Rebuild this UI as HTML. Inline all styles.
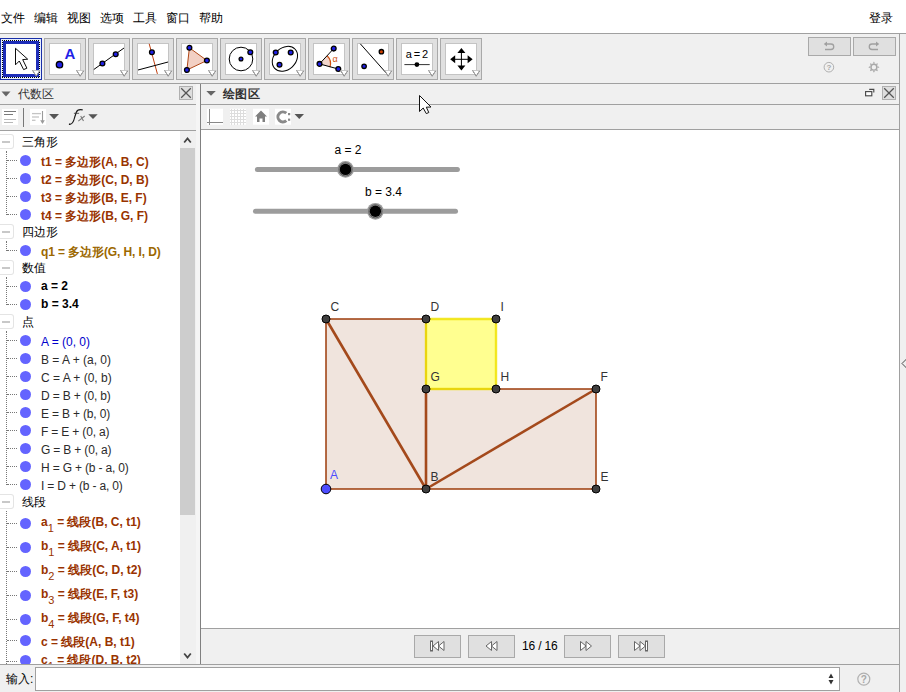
<!DOCTYPE html>
<html><head><meta charset="utf-8">
<style>
*{margin:0;padding:0;box-sizing:border-box}
html,body{width:906px;height:692px;overflow:hidden;background:#fff;font-family:"Liberation Sans",sans-serif;font-size:12px;color:#000}
.a{position:absolute}
.t{position:absolute;white-space:nowrap;font-size:12px;line-height:14px}
.row{position:absolute;left:41px;white-space:nowrap;font-size:12px;line-height:14px}
.b{font-weight:bold}
svg{position:absolute;overflow:visible}
</style></head><body>
<div class="t" style="left:1px;top:11px">文件</div><div class="t" style="left:34px;top:11px">编辑</div><div class="t" style="left:67px;top:11px">视图</div><div class="t" style="left:100px;top:11px">选项</div><div class="t" style="left:133px;top:11px">工具</div><div class="t" style="left:166px;top:11px">窗口</div><div class="t" style="left:199px;top:11px">帮助</div><div class="t" style="left:869px;top:11px">登录</div><svg style="left:0;top:0" width="906" height="692" viewBox="0 0 906 692"><rect x="0" y="34" width="906" height="658" fill="#f0f0f0"/><rect x="0" y="33" width="906" height="1" fill="#a0a0a0"/><rect x="0" y="83" width="899" height="1" fill="#a0a0a0"/><rect x="899" y="33" width="1" height="659" fill="#a0a0a0"/><rect x="44.5" y="38.5" width="41" height="41" fill="#e0e0e0" stroke="#a9a9a9"/><rect x="49.5" y="43.5" width="31" height="31" fill="#fff" stroke="#c4c4c4"/><rect x="88.5" y="38.5" width="41" height="41" fill="#e0e0e0" stroke="#a9a9a9"/><rect x="93.5" y="43.5" width="31" height="31" fill="#fff" stroke="#c4c4c4"/><rect x="132.5" y="38.5" width="41" height="41" fill="#e0e0e0" stroke="#a9a9a9"/><rect x="137.5" y="43.5" width="31" height="31" fill="#fff" stroke="#c4c4c4"/><rect x="176.5" y="38.5" width="41" height="41" fill="#e0e0e0" stroke="#a9a9a9"/><rect x="181.5" y="43.5" width="31" height="31" fill="#fff" stroke="#c4c4c4"/><rect x="220.5" y="38.5" width="41" height="41" fill="#e0e0e0" stroke="#a9a9a9"/><rect x="225.5" y="43.5" width="31" height="31" fill="#fff" stroke="#c4c4c4"/><rect x="264.5" y="38.5" width="41" height="41" fill="#e0e0e0" stroke="#a9a9a9"/><rect x="269.5" y="43.5" width="31" height="31" fill="#fff" stroke="#c4c4c4"/><rect x="308.5" y="38.5" width="41" height="41" fill="#e0e0e0" stroke="#a9a9a9"/><rect x="313.5" y="43.5" width="31" height="31" fill="#fff" stroke="#c4c4c4"/><rect x="352.5" y="38.5" width="41" height="41" fill="#e0e0e0" stroke="#a9a9a9"/><rect x="357.5" y="43.5" width="31" height="31" fill="#fff" stroke="#c4c4c4"/><rect x="396.5" y="38.5" width="41" height="41" fill="#e0e0e0" stroke="#a9a9a9"/><rect x="401.5" y="43.5" width="31" height="31" fill="#fff" stroke="#c4c4c4"/><rect x="440.5" y="38.5" width="41" height="41" fill="#e0e0e0" stroke="#a9a9a9"/><rect x="445.5" y="43.5" width="31" height="31" fill="#fff" stroke="#c4c4c4"/><rect x="0" y="38" width="42" height="42" fill="#1a2fa8"/><rect x="1" y="39" width="40" height="40" fill="#e6efff"/><rect x="3" y="41" width="36" height="36" fill="#1c2cb8"/><rect x="6" y="44" width="30" height="30" fill="#fff"/><g fill="#000"><rect x="2" y="40" width="1" height="1"/><rect x="2" y="77" width="1" height="1"/><rect x="4" y="40" width="1" height="1"/><rect x="4" y="77" width="1" height="1"/><rect x="6" y="40" width="1" height="1"/><rect x="6" y="77" width="1" height="1"/><rect x="8" y="40" width="1" height="1"/><rect x="8" y="77" width="1" height="1"/><rect x="10" y="40" width="1" height="1"/><rect x="10" y="77" width="1" height="1"/><rect x="12" y="40" width="1" height="1"/><rect x="12" y="77" width="1" height="1"/><rect x="14" y="40" width="1" height="1"/><rect x="14" y="77" width="1" height="1"/><rect x="16" y="40" width="1" height="1"/><rect x="16" y="77" width="1" height="1"/><rect x="18" y="40" width="1" height="1"/><rect x="18" y="77" width="1" height="1"/><rect x="20" y="40" width="1" height="1"/><rect x="20" y="77" width="1" height="1"/><rect x="22" y="40" width="1" height="1"/><rect x="22" y="77" width="1" height="1"/><rect x="24" y="40" width="1" height="1"/><rect x="24" y="77" width="1" height="1"/><rect x="26" y="40" width="1" height="1"/><rect x="26" y="77" width="1" height="1"/><rect x="28" y="40" width="1" height="1"/><rect x="28" y="77" width="1" height="1"/><rect x="30" y="40" width="1" height="1"/><rect x="30" y="77" width="1" height="1"/><rect x="32" y="40" width="1" height="1"/><rect x="32" y="77" width="1" height="1"/><rect x="34" y="40" width="1" height="1"/><rect x="34" y="77" width="1" height="1"/><rect x="36" y="40" width="1" height="1"/><rect x="36" y="77" width="1" height="1"/><rect x="38" y="40" width="1" height="1"/><rect x="38" y="77" width="1" height="1"/><rect x="2" y="42" width="1" height="1"/><rect x="39" y="42" width="1" height="1"/><rect x="2" y="44" width="1" height="1"/><rect x="39" y="44" width="1" height="1"/><rect x="2" y="46" width="1" height="1"/><rect x="39" y="46" width="1" height="1"/><rect x="2" y="48" width="1" height="1"/><rect x="39" y="48" width="1" height="1"/><rect x="2" y="50" width="1" height="1"/><rect x="39" y="50" width="1" height="1"/><rect x="2" y="52" width="1" height="1"/><rect x="39" y="52" width="1" height="1"/><rect x="2" y="54" width="1" height="1"/><rect x="39" y="54" width="1" height="1"/><rect x="2" y="56" width="1" height="1"/><rect x="39" y="56" width="1" height="1"/><rect x="2" y="58" width="1" height="1"/><rect x="39" y="58" width="1" height="1"/><rect x="2" y="60" width="1" height="1"/><rect x="39" y="60" width="1" height="1"/><rect x="2" y="62" width="1" height="1"/><rect x="39" y="62" width="1" height="1"/><rect x="2" y="64" width="1" height="1"/><rect x="39" y="64" width="1" height="1"/><rect x="2" y="66" width="1" height="1"/><rect x="39" y="66" width="1" height="1"/><rect x="2" y="68" width="1" height="1"/><rect x="39" y="68" width="1" height="1"/><rect x="2" y="70" width="1" height="1"/><rect x="39" y="70" width="1" height="1"/><rect x="2" y="72" width="1" height="1"/><rect x="39" y="72" width="1" height="1"/><rect x="2" y="74" width="1" height="1"/><rect x="39" y="74" width="1" height="1"/><rect x="2" y="76" width="1" height="1"/><rect x="39" y="76" width="1" height="1"/></g><g transform="translate(0,0)"><path d="M15.5 48.3 L15.5 64.8 L19.3 61 L23.6 69.6 L26.9 68.2 L22.7 59.6 L27.7 59.2 Z" fill="#fff" stroke="#000" stroke-width="0.95" stroke-linejoin="miter"/></g><g transform="translate(49,43)"><circle cx="10.5" cy="21.7" r="3.2" fill="#1f1fe6" stroke="#000" stroke-width="1.3"/><text x="15.6" y="16" font-family="Liberation Sans" font-size="15" font-weight="bold" fill="#1f1fe6">A</text></g><g transform="translate(93,43)"><line x1="0.8" y1="26.5" x2="31" y2="5" stroke="#000" stroke-width="1"/><circle cx="9.4" cy="20.5" r="2.4" fill="#1f1fe6" stroke="#000" stroke-width="1.3"/><circle cx="22.7" cy="11.3" r="2.4" fill="#1f1fe6" stroke="#000" stroke-width="1.3"/></g><g transform="translate(137,43)"><line x1="12.2" y1="0.8" x2="20.4" y2="30.9" stroke="#c04010" stroke-width="1"/><line x1="1" y1="27" x2="31.1" y2="19" stroke="#000" stroke-width="1"/><circle cx="14.9" cy="9.3" r="2.4" fill="#1f1fe6" stroke="#000" stroke-width="1.3"/></g><g transform="translate(181,43)"><polygon points="8.4,4.8 25.9,17.5 5.9,27" fill="#f2d0c4" stroke="#b04818" stroke-width="1"/><circle cx="8.4" cy="4.8" r="2.4" fill="#1f1fe6" stroke="#000" stroke-width="1.3"/><circle cx="25.9" cy="17.5" r="2.4" fill="#1f1fe6" stroke="#000" stroke-width="1.3"/><circle cx="5.9" cy="27" r="2.4" fill="#1f1fe6" stroke="#000" stroke-width="1.3"/></g><g transform="translate(225,43)"><circle cx="16" cy="16" r="11.8" fill="none" stroke="#000" stroke-width="1"/><circle cx="16" cy="16" r="1.9" fill="#1f1fe6" stroke="#000" stroke-width="1.3"/><circle cx="25.3" cy="9.3" r="2.4" fill="#1f1fe6" stroke="#000" stroke-width="1.3"/></g><g transform="translate(269,43)"><ellipse cx="15.9" cy="15.8" rx="14" ry="10.9" transform="rotate(-43 15.9 15.8)" fill="none" stroke="#000" stroke-width="1"/><circle cx="6.7" cy="9.5" r="2.4" fill="#1f1fe6" stroke="#000" stroke-width="1.3"/><circle cx="21.7" cy="9.5" r="2.4" fill="#1f1fe6" stroke="#000" stroke-width="1.3"/><circle cx="10.5" cy="21.8" r="2.4" fill="#1f1fe6" stroke="#000" stroke-width="1.3"/></g><g transform="translate(313,43)"><path d="M6.5 20.9 L14.1 12.8 A11 11 0 0 1 16.9 24.3 Z" fill="#f2d6cc"/><path d="M14.1 12.8 A11 11 0 0 1 16.9 24.3" fill="none" stroke="#d05010" stroke-width="1.2"/><line x1="6.5" y1="20.9" x2="20.7" y2="5.6" stroke="#000"/><line x1="6.5" y1="20.9" x2="25.3" y2="26" stroke="#000"/><circle cx="6.5" cy="20.9" r="2.4" fill="#1f1fe6" stroke="#000" stroke-width="1.3"/><circle cx="20.7" cy="5.6" r="2.4" fill="#1f1fe6" stroke="#000" stroke-width="1.3"/><circle cx="25.3" cy="26" r="2.4" fill="#1f1fe6" stroke="#000" stroke-width="1.3"/><text x="19.5" y="19.3" font-family="Liberation Sans" font-size="9" fill="#d05010">α</text></g><g transform="translate(357,43)"><line x1="3.3" y1="0.8" x2="30" y2="30.9" stroke="#000" stroke-width="1"/><circle cx="24.4" cy="8.7" r="2.2" fill="#d04000" stroke="#000" stroke-width="1.3"/><circle cx="7.1" cy="23.3" r="2.2" fill="#1f1fe6" stroke="#000" stroke-width="1.3"/></g><g transform="translate(401,43)"><text x="4.7" y="14.8" font-family="Liberation Sans" font-size="11" fill="#000" textLength="22.5">a = 2</text><line x1="3.4" y1="21.6" x2="28.7" y2="21.6" stroke="#333" stroke-width="1"/><circle cx="15.9" cy="21.6" r="2.4" fill="#000"/></g><g transform="translate(445,43)"><g fill="#000"><rect x="15.9" y="8" width="1" height="17"/><rect x="8" y="15.8" width="17" height="1"/><path d="M16.4 5 L20.4 10 L12.4 10 Z"/><path d="M16.4 27.5 L20.4 22.5 L12.4 22.5 Z"/><path d="M5.2 16.3 L10.2 12.3 L10.2 20.3 Z"/><path d="M27.6 16.3 L22.6 12.3 L22.6 20.3 Z"/></g></g><path d="M32.6 70.5 L39.8 70.5 L36.2 76 Z" fill="#fff" stroke="#c4c4c4" stroke-width="0.9"/><path d="M32.6 70.5 L36.2 76.2 L39.8 70.5" fill="none" stroke="#6a6a6a" stroke-width="1" stroke-dasharray="1.3 0.6"/><path d="M76.6 70.5 L83.8 70.5 L80.2 76 Z" fill="#fff" stroke="#c4c4c4" stroke-width="0.9"/><path d="M76.6 70.5 L80.2 76.2 L83.8 70.5" fill="none" stroke="#6a6a6a" stroke-width="1" stroke-dasharray="1.3 0.6"/><path d="M120.6 70.5 L127.8 70.5 L124.2 76 Z" fill="#fff" stroke="#c4c4c4" stroke-width="0.9"/><path d="M120.6 70.5 L124.2 76.2 L127.8 70.5" fill="none" stroke="#6a6a6a" stroke-width="1" stroke-dasharray="1.3 0.6"/><path d="M164.6 70.5 L171.8 70.5 L168.2 76 Z" fill="#fff" stroke="#c4c4c4" stroke-width="0.9"/><path d="M164.6 70.5 L168.2 76.2 L171.8 70.5" fill="none" stroke="#6a6a6a" stroke-width="1" stroke-dasharray="1.3 0.6"/><path d="M208.6 70.5 L215.8 70.5 L212.2 76 Z" fill="#fff" stroke="#c4c4c4" stroke-width="0.9"/><path d="M208.6 70.5 L212.2 76.2 L215.8 70.5" fill="none" stroke="#6a6a6a" stroke-width="1" stroke-dasharray="1.3 0.6"/><path d="M252.6 70.5 L259.8 70.5 L256.2 76 Z" fill="#fff" stroke="#c4c4c4" stroke-width="0.9"/><path d="M252.6 70.5 L256.2 76.2 L259.8 70.5" fill="none" stroke="#6a6a6a" stroke-width="1" stroke-dasharray="1.3 0.6"/><path d="M296.6 70.5 L303.8 70.5 L300.2 76 Z" fill="#fff" stroke="#c4c4c4" stroke-width="0.9"/><path d="M296.6 70.5 L300.2 76.2 L303.8 70.5" fill="none" stroke="#6a6a6a" stroke-width="1" stroke-dasharray="1.3 0.6"/><path d="M340.6 70.5 L347.8 70.5 L344.2 76 Z" fill="#fff" stroke="#c4c4c4" stroke-width="0.9"/><path d="M340.6 70.5 L344.2 76.2 L347.8 70.5" fill="none" stroke="#6a6a6a" stroke-width="1" stroke-dasharray="1.3 0.6"/><path d="M384.6 70.5 L391.8 70.5 L388.2 76 Z" fill="#fff" stroke="#c4c4c4" stroke-width="0.9"/><path d="M384.6 70.5 L388.2 76.2 L391.8 70.5" fill="none" stroke="#6a6a6a" stroke-width="1" stroke-dasharray="1.3 0.6"/><path d="M428.6 70.5 L435.8 70.5 L432.2 76 Z" fill="#fff" stroke="#c4c4c4" stroke-width="0.9"/><path d="M428.6 70.5 L432.2 76.2 L435.8 70.5" fill="none" stroke="#6a6a6a" stroke-width="1" stroke-dasharray="1.3 0.6"/><path d="M472.6 70.5 L479.8 70.5 L476.2 76 Z" fill="#fff" stroke="#c4c4c4" stroke-width="0.9"/><path d="M472.6 70.5 L476.2 76.2 L479.8 70.5" fill="none" stroke="#6a6a6a" stroke-width="1" stroke-dasharray="1.3 0.6"/><rect x="808.5" y="37.5" width="42" height="18" fill="#e0e0e0" stroke="#a9a9a9"/><rect x="853.5" y="37.5" width="42" height="18" fill="#e0e0e0" stroke="#a9a9a9"/><path d="M826 44 L831 44 A2.75 2.75 0 0 1 831 49.5 L825 49.5" fill="none" stroke="#a0a0a0" stroke-width="1.3"/><path d="M823.8 44 L827 41.5 L827 46.5 Z" fill="#a0a0a0"/><path d="M877 44 L872 44 A2.75 2.75 0 0 0 872 49.5 L878 49.5" fill="none" stroke="#a0a0a0" stroke-width="1.3"/><path d="M879.2 44 L876 41.5 L876 46.5 Z" fill="#a0a0a0"/><circle cx="828.9" cy="67.2" r="4.8" fill="none" stroke="#b0b0b0" stroke-width="1"/><text x="826.6" y="70.3" font-family="Liberation Sans" font-size="8" font-weight="bold" fill="#a8a8a8">?</text><g transform="translate(873.9,67.2)" fill="#a8a8a8"><circle r="2.9" fill="none" stroke="#a8a8a8" stroke-width="1.4"/><path d="M-1.1 -3.6 L0 -5.6 L1.1 -3.6 Z" transform="rotate(0)"/><path d="M-1.1 -3.6 L0 -5.6 L1.1 -3.6 Z" transform="rotate(45)"/><path d="M-1.1 -3.6 L0 -5.6 L1.1 -3.6 Z" transform="rotate(90)"/><path d="M-1.1 -3.6 L0 -5.6 L1.1 -3.6 Z" transform="rotate(135)"/><path d="M-1.1 -3.6 L0 -5.6 L1.1 -3.6 Z" transform="rotate(180)"/><path d="M-1.1 -3.6 L0 -5.6 L1.1 -3.6 Z" transform="rotate(225)"/><path d="M-1.1 -3.6 L0 -5.6 L1.1 -3.6 Z" transform="rotate(270)"/><path d="M-1.1 -3.6 L0 -5.6 L1.1 -3.6 Z" transform="rotate(315)"/></g><rect x="0" y="104" width="196" height="1" fill="#a0a0a0"/><rect x="0" y="130" width="196" height="1" fill="#a0a0a0"/><rect x="0" y="131" width="180" height="533" fill="#fff"/><path d="M1.5 91.5 L10.5 91.5 L6 96.5 Z" fill="#666"/><rect x="179.5" y="86.5" width="13" height="13" fill="#dedede" stroke="#b0b0b0"/><path d="M181.2 88.2 L190.8 97.8 M190.8 88.2 L181.2 97.8" stroke="#555" stroke-width="1.25"/><rect x="2" y="109" width="16" height="16" fill="#fff"/><g stroke-width="1"><line x1="4" y1="111.5" x2="16" y2="111.5" stroke="#7a7a7a"/><line x1="4" y1="114.5" x2="13" y2="114.5" stroke="#7a7a7a"/><line x1="4" y1="119.5" x2="16" y2="119.5" stroke="#b8b8b8"/><line x1="4" y1="122.5" x2="13" y2="122.5" stroke="#b8b8b8"/></g><rect x="23" y="108" width="1" height="19" fill="#777"/><rect x="30" y="109" width="16" height="16" fill="#fff"/><g stroke-width="1.3" stroke="#c4c4c4"><line x1="32" y1="113.6" x2="41" y2="113.6"/><line x1="32" y1="117" x2="39" y2="117"/><line x1="32" y1="120.3" x2="35.5" y2="120.3"/></g><line x1="42.5" y1="111" x2="42.5" y2="122" stroke="#9a9a9a" stroke-width="1.1"/><path d="M40.2 120.3 L44.8 120.3 L42.5 124 Z" fill="#9a9a9a"/><path d="M49.1 114 L59 114 L54.05 119.2 Z" fill="#555"/><path d="M69.2 124.3 C71.8 124.6 73.6 122 74.6 117.5 L76.2 112.5 C77 110.2 79.5 109.2 82.7 109.9" fill="none" stroke="#1a1a1a" stroke-width="1.15"/><circle cx="69.6" cy="124.2" r="0.8" fill="#1a1a1a"/><path d="M73.9 113.3 L79.1 113.3" stroke="#333" stroke-width="0.8"/><path d="M80.7 116 L83.5 121.1 M84.7 116 L78.3 121.1" stroke="#7a7a7a" stroke-width="1.1"/><path d="M88.3 114.3 L97.7 114.3 L93 119 Z" fill="#555"/><rect x="180" y="131" width="16" height="533" fill="#f0f0f0"/><rect x="180" y="148" width="15" height="367" fill="#cdcdcd"/><path d="M184.2 142.5 L187.5 138.5 L190.8 142.5" fill="none" stroke="#444" stroke-width="1.8"/><path d="M184.2 653.5 L187.5 657.5 L190.8 653.5" fill="none" stroke="#444" stroke-width="1.8"/><rect x="196" y="84" width="4" height="580" fill="#f5f5f5"/><rect x="200" y="84" width="1" height="580" fill="#808080"/><rect x="201" y="104" width="698" height="1" fill="#a0a0a0"/><rect x="201" y="129" width="698" height="1" fill="#a0a0a0"/><rect x="201" y="130" width="698" height="498" fill="#fff"/><rect x="201" y="628" width="698" height="1" fill="#a0a0a0"/><rect x="0" y="664" width="899" height="1" fill="#a0a0a0"/><path d="M206.3 90.9 L215.8 90.9 L211 95.7 Z" fill="#666"/><rect x="865.6" y="91.6" width="6.2" height="4.2" fill="#fff" stroke="#4a4a4a" stroke-width="1.15"/><path d="M869.2 89.3 L873.8 89.3 L873.8 92.6" fill="none" stroke="#4a4a4a" stroke-width="1.15"/><rect x="882.5" y="86.5" width="13" height="13" fill="#dedede" stroke="#b0b0b0"/><path d="M884.2 88.2 L893.8 97.8 M893.8 88.2 L884.2 97.8" stroke="#555" stroke-width="1.25"/><rect x="207" y="108.7" width="16" height="16" fill="#fff"/><line x1="209.5" y1="109" x2="209.5" y2="125" stroke="#888"/><line x1="207" y1="122.5" x2="223" y2="122.5" stroke="#888"/><rect x="230" y="108.7" width="16" height="16" fill="#fff"/><line x1="231.5" y1="109" x2="231.5" y2="125" stroke="#ddd"/><line x1="230" y1="110.5" x2="246" y2="110.5" stroke="#ddd"/><line x1="234.5" y1="109" x2="234.5" y2="125" stroke="#ddd"/><line x1="230" y1="113.5" x2="246" y2="113.5" stroke="#ddd"/><line x1="237.5" y1="109" x2="237.5" y2="125" stroke="#ddd"/><line x1="230" y1="116.5" x2="246" y2="116.5" stroke="#ddd"/><line x1="240.5" y1="109" x2="240.5" y2="125" stroke="#ddd"/><line x1="230" y1="119.5" x2="246" y2="119.5" stroke="#ddd"/><line x1="243.5" y1="109" x2="243.5" y2="125" stroke="#ddd"/><line x1="230" y1="122.5" x2="246" y2="122.5" stroke="#ddd"/><rect x="253" y="108.7" width="16" height="16" fill="#fff"/><path d="M261 110.5 L267 116.5 L265 116.5 L265 122 L262.5 122 L262.5 118.5 L259.5 118.5 L259.5 122 L257 122 L257 116.5 L255 116.5 Z" fill="#808080"/><rect x="275" y="108.7" width="16" height="16" fill="#fff"/><path d="M286.3 113.2 A5 5 0 1 0 286.3 120.6" fill="none" stroke="#8a8a8a" stroke-width="3"/><rect x="288" y="113" width="2.2" height="2.2" fill="#8a8a8a"/><rect x="288" y="118.6" width="2.2" height="2.2" fill="#8a8a8a"/><path d="M294.5 114 L304 114 L299.25 119 Z" fill="#555"/><path d="M906.5 359 L902 363.5 L906.5 368" fill="#f0f0f0" stroke="#333" stroke-width="0.9"/></svg><div class="t" style="left:18px;top:87px;color:#333">代数区</div><div class="t b" style="left:222.5px;top:87px;color:#333;letter-spacing:0.7px">绘图区</div><div class="a" style="left:0;top:131px;width:180px;height:533px;overflow:hidden"><div class="a" style="left:0;top:-131px;width:180px;height:692px"><div class="a" style="left:0;top:134px;width:14px;height:15px;border:1px solid #e4e4e4;border-left:none;border-radius:0 3px 3px 0;background:#fff"></div><div class="a" style="left:2px;top:141px;width:8px;height:2px;background:#c8c8c8"></div><div class="t" style="left:22px;top:134.5px">三角形</div><div class="a" style="left:19.5px;top:154.5px;width:11px;height:11px;border-radius:50%;background:#6464ff"></div><div class="a" style="left:7px;top:160px;width:10px;height:0;border-top:1px dotted #777"></div><div class="row b" style="top:155px;color:#993300">t1 = 多边形(A, B, C)</div><div class="a" style="left:19.5px;top:172.5px;width:11px;height:11px;border-radius:50%;background:#6464ff"></div><div class="a" style="left:7px;top:178px;width:10px;height:0;border-top:1px dotted #777"></div><div class="row b" style="top:173px;color:#993300">t2 = 多边形(C, D, B)</div><div class="a" style="left:19.5px;top:190.5px;width:11px;height:11px;border-radius:50%;background:#6464ff"></div><div class="a" style="left:7px;top:196px;width:10px;height:0;border-top:1px dotted #777"></div><div class="row b" style="top:191px;color:#993300">t3 = 多边形(B, E, F)</div><div class="a" style="left:19.5px;top:208.5px;width:11px;height:11px;border-radius:50%;background:#6464ff"></div><div class="a" style="left:7px;top:214px;width:10px;height:0;border-top:1px dotted #777"></div><div class="row b" style="top:209px;color:#993300">t4 = 多边形(B, G, F)</div><div class="a" style="left:6px;top:151px;width:0;height:64px;border-left:1px dotted #777"></div><div class="a" style="left:0;top:224px;width:14px;height:15px;border:1px solid #e4e4e4;border-left:none;border-radius:0 3px 3px 0;background:#fff"></div><div class="a" style="left:2px;top:231px;width:8px;height:2px;background:#c8c8c8"></div><div class="t" style="left:22px;top:224.5px">四边形</div><div class="a" style="left:19.5px;top:244.5px;width:11px;height:11px;border-radius:50%;background:#6464ff"></div><div class="a" style="left:7px;top:250px;width:10px;height:0;border-top:1px dotted #777"></div><div class="row b" style="top:245px;color:#9c6800;letter-spacing:-0.1px">q1 = 多边形(G, H, I, D)</div><div class="a" style="left:6px;top:241px;width:0;height:10px;border-left:1px dotted #777"></div><div class="a" style="left:0;top:260px;width:14px;height:15px;border:1px solid #e4e4e4;border-left:none;border-radius:0 3px 3px 0;background:#fff"></div><div class="a" style="left:2px;top:267px;width:8px;height:2px;background:#c8c8c8"></div><div class="t" style="left:22px;top:260.5px">数值</div><div class="a" style="left:19.5px;top:280.5px;width:11px;height:11px;border-radius:50%;background:#6464ff"></div><div class="a" style="left:7px;top:286px;width:10px;height:0;border-top:1px dotted #777"></div><div class="row b" style="top:279px;color:#000">a = 2</div><div class="a" style="left:19.5px;top:298.5px;width:11px;height:11px;border-radius:50%;background:#6464ff"></div><div class="a" style="left:7px;top:304px;width:10px;height:0;border-top:1px dotted #777"></div><div class="row b" style="top:297px;color:#000">b = 3.4</div><div class="a" style="left:6px;top:277px;width:0;height:28px;border-left:1px dotted #777"></div><div class="a" style="left:0;top:314px;width:14px;height:15px;border:1px solid #e4e4e4;border-left:none;border-radius:0 3px 3px 0;background:#fff"></div><div class="a" style="left:2px;top:321px;width:8px;height:2px;background:#c8c8c8"></div><div class="t" style="left:22px;top:314.5px">点</div><div class="a" style="left:19.5px;top:334.5px;width:11px;height:11px;border-radius:50%;background:#6464ff"></div><div class="a" style="left:7px;top:340px;width:10px;height:0;border-top:1px dotted #777"></div><div class="row" style="top:335px;color:#0000cc">A = (0, 0)</div><div class="a" style="left:19.5px;top:352.5px;width:11px;height:11px;border-radius:50%;background:#6464ff"></div><div class="a" style="left:7px;top:358px;width:10px;height:0;border-top:1px dotted #777"></div><div class="row" style="top:353px;color:#2b2b2b">B = A + (a, 0)</div><div class="a" style="left:19.5px;top:370.5px;width:11px;height:11px;border-radius:50%;background:#6464ff"></div><div class="a" style="left:7px;top:376px;width:10px;height:0;border-top:1px dotted #777"></div><div class="row" style="top:371px;color:#2b2b2b">C = A + (0, b)</div><div class="a" style="left:19.5px;top:388.5px;width:11px;height:11px;border-radius:50%;background:#6464ff"></div><div class="a" style="left:7px;top:394px;width:10px;height:0;border-top:1px dotted #777"></div><div class="row" style="top:389px;color:#2b2b2b;letter-spacing:-0.17px">D = B + (0, b)</div><div class="a" style="left:19.5px;top:406.5px;width:11px;height:11px;border-radius:50%;background:#6464ff"></div><div class="a" style="left:7px;top:412px;width:10px;height:0;border-top:1px dotted #777"></div><div class="row" style="top:407px;color:#2b2b2b;letter-spacing:-0.17px">E = B + (b, 0)</div><div class="a" style="left:19.5px;top:424.5px;width:11px;height:11px;border-radius:50%;background:#6464ff"></div><div class="a" style="left:7px;top:430px;width:10px;height:0;border-top:1px dotted #777"></div><div class="row" style="top:425px;color:#2b2b2b;letter-spacing:-0.17px">F = E + (0, a)</div><div class="a" style="left:19.5px;top:442.5px;width:11px;height:11px;border-radius:50%;background:#6464ff"></div><div class="a" style="left:7px;top:448px;width:10px;height:0;border-top:1px dotted #777"></div><div class="row" style="top:443px;color:#2b2b2b;letter-spacing:-0.17px">G = B + (0, a)</div><div class="a" style="left:19.5px;top:460.5px;width:11px;height:11px;border-radius:50%;background:#6464ff"></div><div class="a" style="left:7px;top:466px;width:10px;height:0;border-top:1px dotted #777"></div><div class="row" style="top:461px;color:#2b2b2b;letter-spacing:-0.17px">H = G + (b - a, 0)</div><div class="a" style="left:19.5px;top:478.5px;width:11px;height:11px;border-radius:50%;background:#6464ff"></div><div class="a" style="left:7px;top:484px;width:10px;height:0;border-top:1px dotted #777"></div><div class="row" style="top:479px;color:#2b2b2b;letter-spacing:-0.17px">I = D + (b - a, 0)</div><div class="a" style="left:6px;top:331px;width:0;height:154px;border-left:1px dotted #777"></div><div class="a" style="left:0;top:494px;width:14px;height:15px;border:1px solid #e4e4e4;border-left:none;border-radius:0 3px 3px 0;background:#fff"></div><div class="a" style="left:2px;top:501px;width:8px;height:2px;background:#c8c8c8"></div><div class="t" style="left:22px;top:494.5px">线段</div><div class="a" style="left:19.5px;top:517.5px;width:11px;height:11px;border-radius:50%;background:#6464ff"></div><div class="a" style="left:7px;top:523px;width:10px;height:0;border-top:1px dotted #777"></div><div class="row b" style="top:515.2px;color:#993300">a<sub style="font-size:11px;font-weight:normal;vertical-align:-6px">1</sub> = 线段(B, C, t1)</div><div class="a" style="left:19.5px;top:541.5px;width:11px;height:11px;border-radius:50%;background:#6464ff"></div><div class="a" style="left:7px;top:547px;width:10px;height:0;border-top:1px dotted #777"></div><div class="row b" style="top:539.2px;color:#993300">b<sub style="font-size:11px;font-weight:normal;vertical-align:-6px">1</sub> = 线段(C, A, t1)</div><div class="a" style="left:19.5px;top:565.5px;width:11px;height:11px;border-radius:50%;background:#6464ff"></div><div class="a" style="left:7px;top:571px;width:10px;height:0;border-top:1px dotted #777"></div><div class="row b" style="top:563.2px;color:#993300">b<sub style="font-size:11px;font-weight:normal;vertical-align:-6px">2</sub> = 线段(C, D, t2)</div><div class="a" style="left:19.5px;top:589.5px;width:11px;height:11px;border-radius:50%;background:#6464ff"></div><div class="a" style="left:7px;top:595px;width:10px;height:0;border-top:1px dotted #777"></div><div class="row b" style="top:587.2px;color:#993300">b<sub style="font-size:11px;font-weight:normal;vertical-align:-6px">3</sub> = 线段(E, F, t3)</div><div class="a" style="left:19.5px;top:613.5px;width:11px;height:11px;border-radius:50%;background:#6464ff"></div><div class="a" style="left:7px;top:619px;width:10px;height:0;border-top:1px dotted #777"></div><div class="row b" style="top:611.2px;color:#993300">b<sub style="font-size:11px;font-weight:normal;vertical-align:-6px">4</sub> = 线段(G, F, t4)</div><div class="a" style="left:19.5px;top:634.5px;width:11px;height:11px;border-radius:50%;background:#6464ff"></div><div class="a" style="left:7px;top:640px;width:10px;height:0;border-top:1px dotted #777"></div><div class="row b" style="top:635px;color:#993300">c = 线段(A, B, t1)</div><div class="a" style="left:19.5px;top:655.1px;width:11px;height:11px;border-radius:50%;background:#6464ff"></div><div class="a" style="left:7px;top:661px;width:10px;height:0;border-top:1px dotted #777"></div><div class="row b" style="top:652.8000000000001px;color:#993300">c<sub style="font-size:11px;font-weight:normal;vertical-align:-6px">1</sub> = 线段(D, B, t2)</div><div class="a" style="left:6px;top:511px;width:0;height:153px;border-left:1px dotted #777"></div></div></div><svg style="left:0;top:0" width="906" height="692" viewBox="0 0 906 692"><defs><clipPath id="cv"><rect x="201" y="130" width="698" height="498"/></clipPath></defs><g clip-path="url(#cv)"><line x1="257.4" y1="169.4" x2="457.4" y2="169.4" stroke="#9c9c9c" stroke-width="5" stroke-linecap="round"/><circle cx="345.5" cy="169.4" r="8.4" fill="#9c9c9c"/><circle cx="345.5" cy="169.4" r="6.6" fill="none" stroke="#555" stroke-width="0.9"/><circle cx="345.5" cy="169.4" r="5.7" fill="#000"/><line x1="255.5" y1="211.3" x2="455.5" y2="211.3" stroke="#9c9c9c" stroke-width="5" stroke-linecap="round"/><circle cx="375.4" cy="211.3" r="8.4" fill="#9c9c9c"/><circle cx="375.4" cy="211.3" r="6.6" fill="none" stroke="#555" stroke-width="0.9"/><circle cx="375.4" cy="211.3" r="5.7" fill="#000"/><polygon points="326,489 426,489 326,319" fill="#f0e4dd"/><polygon points="326,319 426,319 426,489" fill="#f0e4dd"/><polygon points="426,489 596,489 596,389" fill="#f0e4dd"/><polygon points="426,489 426,389 596,389" fill="#f0e4dd"/><polygon points="426,389 496,389 496,319 426,319" fill="#ffff90"/><line x1="326" y1="489" x2="426" y2="489" stroke="rgba(153,51,0,0.72)" stroke-width="2"/><line x1="326" y1="319" x2="326" y2="489" stroke="rgba(153,51,0,0.72)" stroke-width="2"/><line x1="326" y1="319" x2="426" y2="319" stroke="rgba(153,51,0,0.72)" stroke-width="2"/><line x1="426" y1="319" x2="426" y2="389" stroke="rgba(153,51,0,0.72)" stroke-width="2"/><line x1="426" y1="489" x2="596" y2="489" stroke="rgba(153,51,0,0.72)" stroke-width="2"/><line x1="596" y1="489" x2="596" y2="389" stroke="rgba(153,51,0,0.72)" stroke-width="2"/><line x1="426" y1="389" x2="596" y2="389" stroke="rgba(153,51,0,0.72)" stroke-width="2"/><line x1="426" y1="489" x2="326" y2="319" stroke="rgba(153,51,0,0.88)" stroke-width="2.6"/><line x1="596" y1="389" x2="426" y2="489" stroke="rgba(153,51,0,0.88)" stroke-width="2.6"/><line x1="426" y1="489" x2="426" y2="389" stroke="rgba(153,51,0,0.88)" stroke-width="2.6"/><line x1="426" y1="389" x2="496" y2="389" stroke="rgba(240,228,10,0.88)" stroke-width="2.4"/><line x1="496" y1="389" x2="496" y2="319" stroke="rgba(240,228,10,0.88)" stroke-width="2.4"/><line x1="496" y1="319" x2="426" y2="319" stroke="rgba(240,228,10,0.88)" stroke-width="2.4"/><line x1="426" y1="319" x2="426" y2="389" stroke="rgba(240,228,10,0.88)" stroke-width="2.4"/><circle cx="326" cy="489" r="4.8" fill="#4d4dff" stroke="#000" stroke-width="1"/><circle cx="426" cy="489" r="4" fill="#404040" stroke="#000" stroke-width="1"/><circle cx="326" cy="319" r="4" fill="#404040" stroke="#000" stroke-width="1"/><circle cx="426" cy="319" r="4" fill="#404040" stroke="#000" stroke-width="1"/><circle cx="596" cy="489" r="4" fill="#404040" stroke="#000" stroke-width="1"/><circle cx="596" cy="389" r="4" fill="#404040" stroke="#000" stroke-width="1"/><circle cx="426" cy="389" r="4" fill="#404040" stroke="#000" stroke-width="1"/><circle cx="496" cy="389" r="4" fill="#404040" stroke="#000" stroke-width="1"/><circle cx="496" cy="319" r="4" fill="#404040" stroke="#000" stroke-width="1"/></g></svg><div class="t" style="left:330px;top:468px;color:#4d4dff">A</div><div class="t" style="left:430.5px;top:470px;color:#333">B</div><div class="t" style="left:330.5px;top:300px;color:#333">C</div><div class="t" style="left:430.5px;top:300px;color:#333">D</div><div class="t" style="left:600.5px;top:470px;color:#333">E</div><div class="t" style="left:600.5px;top:370px;color:#333">F</div><div class="t" style="left:430.5px;top:370px;color:#333">G</div><div class="t" style="left:500.5px;top:370px;color:#333">H</div><div class="t" style="left:500.5px;top:300px;color:#333">I</div><div class="t" style="left:334.4px;top:143px;color:#000">a = 2</div><div class="t" style="left:364.9px;top:185px;color:#000">b = 3.4</div><svg style="left:0;top:0" width="906" height="692" viewBox="0 0 906 692"><rect x="414.5" y="635.5" width="46" height="22" fill="#e0e0e0" stroke="#a9a9a9"/><rect x="468.5" y="635.5" width="46" height="22" fill="#e0e0e0" stroke="#a9a9a9"/><rect x="564.5" y="635.5" width="46" height="22" fill="#e0e0e0" stroke="#a9a9a9"/><rect x="618.5" y="635.5" width="46" height="22" fill="#e0e0e0" stroke="#a9a9a9"/><g fill="#fff" stroke="#666" stroke-width="1" stroke-linejoin="miter"><rect x="430.5" y="641" width="2" height="10"/><path d="M438.5 641.5 L433.0 646 L438.5 650.5 Z"/><path d="M444 641.5 L438.5 646 L444 650.5 Z"/><path d="M491.5 641.5 L486.0 646 L491.5 650.5 Z"/><path d="M497 641.5 L491.5 646 L497 650.5 Z"/><path d="M580.5 641.5 L586.0 646 L580.5 650.5 Z"/><path d="M586 641.5 L591.5 646 L586 650.5 Z"/><path d="M634.5 641.5 L640.0 646 L634.5 650.5 Z"/><path d="M640 641.5 L645.5 646 L640 650.5 Z"/><rect x="645.5" y="641" width="2" height="10"/></g><rect x="35.5" y="667.5" width="804" height="23" fill="#fff" stroke="#a0a0a0"/><path d="M828.5 678 L831 673.5 L833.5 678 Z M828.5 680 L831 684.5 L833.5 680 Z" fill="#333"/><circle cx="863.8" cy="679.1" r="6" fill="none" stroke="#b0b0b0" stroke-width="1.2"/><text x="860.8" y="683" font-family="Liberation Sans" font-size="10" font-weight="bold" fill="#a8a8a8">?</text><path d="M419.5 95.5 L419.5 111.5 L423.2 108 L426.3 113.6 L428.8 112.5 L426.3 107.2 L431 107 Z" fill="#fff" stroke="#111" stroke-width="1" stroke-linejoin="round"/></svg><div class="t" style="left:522px;top:639px;letter-spacing:-0.15px">16 / 16</div><div class="t" style="left:6px;top:672px">输入:</div></body></html>
